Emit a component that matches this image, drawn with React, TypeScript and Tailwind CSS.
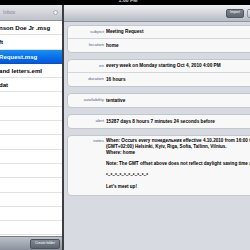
import React from 'react';

const files = ['nson Doe Jr .msg', 'ft', 'Request.msg', 'and letters.eml', 'dat'];

const notes = [
  'When: Occurs every понедельник effective 4.10.2010 from 16:00 to 17:00',
  '(GMT+02:00) Helsinki, Kyiv, Riga, Sofia, Tallinn, Vilnius.',
  'Where: home',
  ' ',
  'Note: The GMT offset above does not reflect daylight saving time adjustments.',
  ' ',
  '*~*~*~*~*~*~*~*~*~*',
  ' ',
  "Let's meet up!",
];

function Row({ label, value, last }: { label: string; value: string; last?: boolean }) {
  return (
    <div className={`flex items-center h-[13px] ${last ? '' : 'border-b border-[#d3d6db]'}`}>
      <div className="w-[36px] shrink-0 text-right text-[4.4px] text-[#50618a]">{label}</div>
      <div className="ml-[2px] whitespace-nowrap text-[4.7px] font-bold text-black">{value}</div>
    </div>
  );
}

function Group({ children }: { children: React.ReactNode }) {
  return (
    <div className="ml-[3px] mr-[-10px] rounded-[4px] border border-[#c2c6cd] bg-[#f8f8f8] overflow-hidden">
      {children}
    </div>
  );
}

export default function App() {
  const rows = Array.from({ length: 16 });
  return (
    <div className="w-[250px] h-[250px] overflow-hidden flex flex-col bg-black font-['Liberation_Sans',Arial,sans-serif]">
      {/* status bar */}
      <div className="h-[5px] shrink-0 bg-black overflow-hidden flex justify-center">
        <span className="mt-[-2px] text-[5px] font-bold leading-none text-white/80 ml-[6px]">1:00 PM</span>
      </div>

      <div className="flex flex-1 min-h-0">
        {/* left pane */}
        <div className="w-[62px] shrink-0 flex flex-col bg-white">
          <div className="h-[16px] shrink-0 flex items-center justify-between px-[3px] bg-gradient-to-b from-[#e4e6ea] to-[#bfc3ca] border-b border-[#8e949d]">
            <span className="text-[5px] text-[#7f858f]">Inbox</span>
            <span className="w-[5px] h-[5px] rounded-full bg-[#f2f3f5] border border-[#a5aab2] mr-[1px]" />
          </div>
          <div className="flex-1 min-h-0 overflow-hidden">
            {rows.map((_, i) => {
              const name = files[i];
              const selected = i === 2;
              return (
                <div
                  key={i}
                  className={`h-[14.3px] flex items-center border-b ${
                    selected
                      ? 'bg-gradient-to-b from-[#1a8ef4] to-[#0457e0] border-[#0b4fc0] text-white'
                      : 'border-[#e2e2e2] text-black'
                  }`}
                >
                  {name && (
                    <span className="ml-[-1px] whitespace-nowrap text-[6.1px] font-bold">{name}</span>
                  )}
                </div>
              );
            })}
          </div>
          <div className="h-[14px] shrink-0 flex items-center justify-end pr-[2px] bg-gradient-to-b from-[#bcc1c9] to-[#8b929e] border-t border-[#7a808a]">
            <button className="w-[30px] h-[10px] rounded-[2px] bg-gradient-to-b from-[#848a94] to-[#5e6570] border border-[#4d535c] text-[3.5px] text-white leading-none">
              Create folder
            </button>
          </div>
        </div>

        <div className="w-[2px] shrink-0 bg-[#3c3e42]" />

        {/* right pane */}
        <div className="flex-1 min-w-0 flex flex-col bg-[#d7dae0]">
          <div className="h-[17px] shrink-0 flex items-center justify-end bg-gradient-to-b from-[#f0f1f3] to-[#b6bbc4] border-b border-[#8f959e]">
            <button className="w-[18px] h-[9px] rounded-[2px] bg-gradient-to-b from-[#7d848e] to-[#5f6670] border border-[#50565f] text-[3.5px] text-white leading-none">
              Import
            </button>
            <div className="ml-[3px] mr-[-6px] w-[9px] h-[9px] rounded-[2px] bg-gradient-to-b from-[#eceef1] to-[#c2c6cd] border border-[#8c929b]" />
          </div>

          <div className="flex flex-col gap-[6px] pt-[3px] overflow-hidden">
            <Group>
              <Row label="subject" value="Meeting Request" />
              <Row label="location" value="home" last />
            </Group>
            <Group>
              <Row label="on" value="every week on Monday starting Oct 4, 2010 4:00 PM" />
              <Row label="duration" value="16 hours" last />
            </Group>
            <Group>
              <Row label="availability" value="tentative" last />
            </Group>
            <Group>
              <Row label="alert" value="15287 days 8 hours 7 minutes 24 seconds before" last />
            </Group>
            <Group>
              <div className="flex pt-[2px] pb-[5px]">
                <div className="w-[36px] shrink-0 text-right text-[4.4px] leading-[5.8px] text-[#50618a]">notes</div>
                <div className="ml-[2px] text-[4.6px] leading-[5.8px] font-bold text-black">
                  {notes.map((l, i) => (
                    <div key={i} className="whitespace-pre">{l}</div>
                  ))}
                </div>
              </div>
            </Group>
          </div>
        </div>
      </div>
    </div>
  );
}
